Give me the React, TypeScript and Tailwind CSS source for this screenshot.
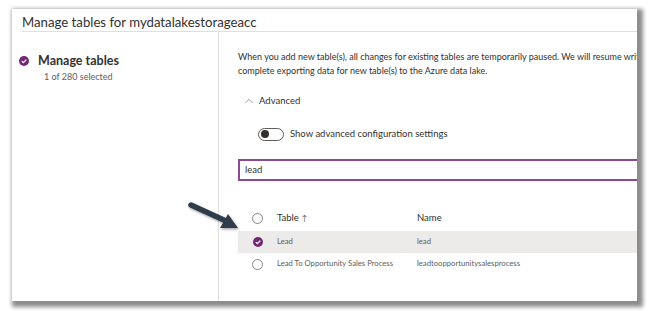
import { ChevronUp } from 'lucide-react';

const FONT = { fontFamily: 'Lato, "Open Sans", sans-serif' };

const ROWS = [
  { table: 'Lead', name: 'lead', selected: true },
  { table: 'Lead To Opportunity Sales Process', name: 'leadtoopportunitysalesprocess', selected: false },
];

export default function App() {
  return (
    <div className="relative w-[650px] h-[311px] bg-white overflow-hidden" style={FONT}>
      <div className="ml-[12px] mt-[9px] w-[625px] h-[292px] bg-white flex flex-col shadow-[3px_3px_4px_3px_rgba(0,0,0,0.45)]">
        <div className="ml-[10px] h-[23px] pt-[3px] border-b border-[#e1dfdd]">
          <h1 className="text-[13.2px] leading-[20px] text-[#323130] whitespace-nowrap">Manage tables for mydatalakestorageacc</h1>
        </div>

        <div className="flex flex-1 min-h-0">
          <div className="w-[207px] border-r border-[#e1dfdd] pt-[20px] pl-[7px]">
            <div className="flex items-center gap-[9px]">
              <CheckCircle />
              <span className="text-[12.5px] leading-[18px] font-bold text-[#323130]">Manage tables</span>
            </div>
            <div className="ml-[25px] text-[9px] leading-[14px] text-[#605e5c]">1 of 280 selected</div>
          </div>

          <div className="flex-1 min-w-0 pl-[19px] pt-[18px] overflow-hidden">
            <p className="text-[9px] leading-[14px] text-[#323130] whitespace-nowrap">
              When you add new table(s), all changes for existing tables are temporarily paused. We will resume writing changes once we
              <br />
              complete exporting data for new table(s) to the Azure data lake.
            </p>

            <div className="flex items-center gap-[3px] mt-[16px] ml-[4px] h-[14px]">
              <ChevronUp size={14} strokeWidth={1} className="text-[#605e5c]" />
              <span className="text-[9.5px] text-[#323130]">Advanced</span>
            </div>

            <div className="flex items-center gap-[6px] mt-[19px] ml-[20px]">
              <div className="w-[26px] h-[13px] rounded-full border border-[#605e5c] flex items-center px-[2px]">
                <div className="w-[8px] h-[8px] rounded-full bg-[#323130]" />
              </div>
              <span className="text-[9.5px] text-[#323130]">Show advanced configuration settings</span>
            </div>

            <div className="mt-[18px] -mr-[4px] h-[22px] border-2 border-[#8a4a8f] flex items-center pl-[5px]">
              <span className="text-[9.5px] text-[#323130]">lead</span>
            </div>

            <div className="mt-[24px] -mr-[4px]">
              <div className="flex items-center h-[26px] text-[9.5px] text-[#323130]">
                <div className="w-[39px] flex justify-center">
                  <EmptyCircle />
                </div>
                <span className="w-[140px]">
                  Table <span className="text-[8px] text-[#605e5c]">↑</span>
                </span>
                <span>Name</span>
              </div>
              {ROWS.map(r => (
                <div
                  key={r.name}
                  className={`flex items-center h-[22px] text-[7.7px] text-[#605e5c] ${r.selected ? 'bg-[#edebe9]' : ''}`}
                >
                  <div className="w-[39px] flex justify-center">{r.selected ? <CheckCircle /> : <EmptyCircle />}</div>
                  <span className="w-[140px] whitespace-nowrap">{r.table}</span>
                  <span className="whitespace-nowrap">{r.name}</span>
                </div>
              ))}
            </div>
          </div>
        </div>
      </div>

      <svg className="absolute left-[184px] top-[198px]" width="62" height="38" viewBox="0 0 62 38">
        <defs>
          <filter id="sh" x="-20%" y="-20%" width="140%" height="140%">
            <feDropShadow dx="1" dy="1.5" stdDeviation="1" floodColor="#000" floodOpacity="0.35" />
          </filter>
        </defs>
        <g filter="url(#sh)">
          <line x1="7" y1="7" x2="42" y2="23" stroke="#2e3d4a" strokeWidth="5.5" strokeLinecap="round" />
          <polygon points="54,30 36,30 44,16" fill="#2e3d4a" />
        </g>
      </svg>
    </div>
  );
}

function CheckCircle() {
  return (
    <svg width="10" height="10" viewBox="0 0 10 10">
      <circle cx="5" cy="5" r="5" fill="#742774" />
      <path d="M2.8 5.1 L4.4 6.6 L7.3 3.6" fill="none" stroke="#fff" strokeWidth="1.3" />
    </svg>
  );
}

function EmptyCircle() {
  return <div className="w-[11px] h-[11px] rounded-full border border-[#8a8886] bg-white" />;
}
